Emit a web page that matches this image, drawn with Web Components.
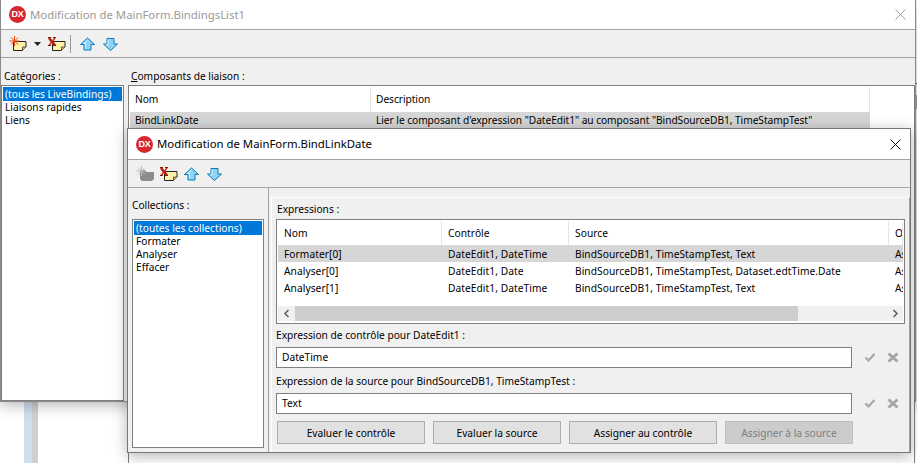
<!DOCTYPE html>
<html lang="fr"><head><meta charset="utf-8"><title>Modification</title>
<style>
html,body{margin:0;padding:0;height:100%;overflow:hidden;background:#fff}
body{font:10.2px/13px "Noto Sans","Liberation Sans",sans-serif;color:#000}
</style></head><body>
<x-desktop>
  <x-window slot="win" style="--l:0px;--t:-1px;--w:916px;--h:403px;--bd:#8b8b8b" caption="Modification de MainForm.BindingsList1" inactive>
    <x-toolbar slot="toolbar"><x-icon name="new"></x-icon><x-icon name="drop"></x-icon><x-icon name="del"></x-icon><x-icon name="sep"></x-icon><x-icon name="up"></x-icon><x-icon name="down"></x-icon></x-toolbar>
    <x-back-body>
      <x-list slot="cats" selected="0" items="(tous les LiveBindings)|Liaisons rapides|Liens"><u-label style="--pt:10px;--lh:17px;--pl:3px"><span>Caté<u>g</u>ories :</span></u-label></x-list>
      <x-pane slot="comps">
        <u-label style="--pt:10px;--lh:17px;--pl:3px"><span><u>C</u>omposants de liaison :</span></u-label>
        <x-grid style="--cols:241px 499px;--rw:740px;--gh:400px;--hh:25px;--cx:5px;letter-spacing:-.05px">
          <x-row head cells="Nom|Description"></x-row>
          <x-row sel cells="BindLinkDate|Lier le composant d'expression &quot;DateEdit1&quot; au composant &quot;BindSourceDB1, TimeStampTest&quot;"></x-row>
        </x-grid>
      </x-pane>
    </x-back-body>
  </x-window>

  <x-window slot="win" style="--l:127px;--t:128px;--w:784px;--h:325px;--bd:#777" caption="Modification de MainForm.BindLinkDate">
    <x-toolbar slot="toolbar"><x-icon name="newoff"></x-icon><x-icon name="del"></x-icon><x-icon name="up" style="margin-left:3px"></x-icon><x-icon name="down"></x-icon></x-toolbar>
    <x-front-body>
      <x-list slot="left" selected="0" items="(toutes les collections)|Formater|Analyser|Effacer"><u-label style="--lh:27px;--pl:0px"><span>Collections :</span></u-label></x-list>
      <x-expr-panel slot="right">
        <u-label style="--pt:2px;--lh:19px;--pl:1px"><span>Expressions :</span></u-label>
        <x-grid scroll style="--cols:164px 127px 320px 1fr;--gh:105px;--hh:24px;--mb:4px;--rt:1px;letter-spacing:.06px">
          <x-row head cells="Nom|Contrôle|Source|O"></x-row>
          <x-row sel cells="Formater[0]|DateEdit1, DateTime|BindSourceDB1, TimeStampTest, Text|As"></x-row>
          <x-row cells="Analyser[0]|DateEdit1, Date|BindSourceDB1, TimeStampTest, Dataset.edtTime.Date|As"></x-row>
          <x-row cells="Analyser[1]|DateEdit1, DateTime|BindSourceDB1, TimeStampTest, Text|As"></x-row>
        </x-grid>
        <x-expr label="Expression de contrôle pour DateEdit1 :" value="DateTime"></x-expr>
        <x-expr label="Expression de la source pour BindSourceDB1, TimeStampTest :" value="Text"></x-expr>
        <x-actions>
          <x-btn style="--bw:148px">Evaluer le contrôle</x-btn>
          <x-btn style="--bw:128px">Evaluer la source</x-btn>
          <x-btn style="--bw:148px">Assigner au contrôle</x-btn>
          <x-btn style="--bw:128px" disabled>Assigner à la source</x-btn>
        </x-actions>
      </x-expr-panel>
    </x-front-body>
  </x-window>
</x-desktop>

<script>
function el(name, css, html){
  customElements.define(name, class extends HTMLElement{
    connectedCallback(){
      if(this.shadowRoot) return;
      const r=this.attachShadow({mode:'open'});
      r.innerHTML='<style>'+css+'</style>'+(typeof html==='function'?html(this):html);
    }
  });
}
const esc=s=>s.replace(/&/g,'&amp;').replace(/</g,'&lt;').replace(/"/g,'&quot;');

el('x-desktop',`:host{display:block;position:relative;width:917px;height:463px;overflow:hidden;background:#fff}
 .bar{position:absolute;top:395px;bottom:0}
 .a{left:24px;width:8px;background:#cfdfee}.b{left:32px;width:6px;background:#d0d0d0}
 .c{left:356px;width:7px;background:#d0d0d0}
 .d{left:916px;top:83px;width:1px;height:1px;bottom:auto;background:#2a4a6a}
 .e{left:916px;top:95px;width:1px;height:14px;bottom:auto;background:#a0a0a0}`,
 `<div class="bar a"></div><div class="bar b"></div><div class="bar c"></div><div class="bar d"></div><div class="bar e"></div><slot name="win"></slot>`);

el('x-window',`:host{position:absolute;left:var(--l);top:var(--t);width:var(--w);height:var(--h);box-sizing:border-box;
   display:flex;flex-direction:column;background:#f0f0f0;border:1px solid var(--bd);box-shadow:0 3px 14px rgba(0,0,0,.3)}
 .t{flex:none;height:30px;background:#fff;border-bottom:1px solid #a3a3a3;display:flex;align-items:center;padding:0 0 0 8px;gap:5px;
   font:11.35px/16px "Noto Sans","Liberation Sans",sans-serif;color:#000}
 :host([inactive]) .t{color:#9a9a9a;height:29px}
 .dx{width:17px;height:17px;border-radius:50%;background:#d7272f;color:#fff;font:bold 9px/17px "Liberation Sans",sans-serif;text-align:center;letter-spacing:-.3px;flex:none}
 .c{flex:1;white-space:nowrap;margin-left:-1px}
 .x{flex:none;width:30px;display:flex;justify-content:center}
 svg{stroke:#111;fill:none;display:block}
 :host([inactive]) .x svg{stroke:#a0a0a0}
 .b{flex:1;min-height:0;display:flex;flex-direction:column}`,
 h=>`<div class="t"><span class="dx">DX</span><span class="c">${esc(h.getAttribute('caption'))}</span><span class="x"><svg width="11" height="11" viewBox="0 0 11 11"><path d="M.5.5l10 10M10.500.5l-10 10"/></svg></span></div><slot name="toolbar"></slot><div class="b"><slot></slot></div>`);

el('x-toolbar',`:host{flex:none;display:flex;align-items:flex-start;height:22px;padding:5px 0 0 7px;border-bottom:1px solid #a3a3a3;background:#f0f0f0;gap:3px}`,`<slot></slot>`);

const note=(x,y)=>`<path d="M${x+.5} ${y+.5}h12.500v5.500l-3.500 3.500h-9z" fill="#fff2a8" stroke="#222"/><path d="M${x+9.5} ${y+9.5}v-3.500h3.500" fill="#d9c97a" stroke="#555"/>`;
const star=c=>`<path d="M6.500 1v10M1.500 6h10M3 2.500l7 7M10 2.500l-7 7" stroke="${c}" stroke-width="1"/>`;
const ICONS={
 new:[20,`${note(5,6)}${star('#f04a10')}`],
 newoff:[20,`<path d="M5 7h14v7l-2 2H7l-2-2z" fill="#8c8c8c"/><path d="M5 5h6v2H5z" fill="#8c8c8c"/>${star('#bdbdbd')}`],
 del:[20,`${note(6,6)}<path d="M3 3l6 7.500" stroke="#b4210f" stroke-width="2.600"/><path d="M9 3 3 10.500" stroke="#c42a15" stroke-width="1.300"/><path d="M2 2.500h3M7 2.500h3M2 10.500h3M7 10.500h3" stroke="#8a1a0c"/>`],
 drop:[12,`<path d="M3 7h7l-3.500 4z" fill="#222"/>`],
 sep:[8,`<path d="M1.500 0v18" stroke="#9a9a9a"/>`],
 up:[18,`<path d="M7.500 3 14.500 9.500h-3.500v5.500h-7V9.500H.5z" fill="#8fd3f5" stroke="#0a78b8"/><path d="M7.500 5 3.500 8.500h2v5" stroke="#d8f2fc" fill="none"/>`],
 down:[18,`<path d="M9.500 15.500 16.500 9h-3.500V3.500h-7V9H2.500z" fill="#8fd3f5" stroke="#0a78b8"/><path d="M7 4.500V10H5" stroke="#d8f2fc" fill="none"/>`]
};
el('x-icon',`:host{display:block;flex:none}svg{display:block}`,h=>{
  const [w,b]=ICONS[h.getAttribute('name')];
  return `<svg width="${w}" height="18" viewBox="0 0 ${w} 18">${b}</svg>`;
});

el('u-label',`:host{display:block;flex:none;padding-top:var(--pt,0);height:var(--lh,27px);line-height:var(--lh,27px);padding-left:var(--pl,3px);white-space:nowrap}`,`<slot></slot>`);

el('x-back-body',`:host{flex:1;display:grid;grid-template-columns:123px 1fr;min-height:0}`,`<slot name="cats"></slot><slot name="comps"></slot>`);
el('x-pane',`:host{display:flex;flex-direction:column;padding-left:4px;min-height:0}`,`<slot></slot>`);

el('x-list',`:host{display:flex;flex-direction:column;min-height:0}
 .box{flex:1;min-height:0;background:#fff;border:1px solid #7f7f7f;padding:1px}
 .i{height:13px;line-height:13px;padding-left:2px;white-space:nowrap}
 .i.s{background:#0078d7;color:#fff;height:14px;line-height:14px}`,
 h=>{const s=+h.getAttribute('selected');return `<slot></slot><div class="box">`+h.getAttribute('items').split('|').map((t,i)=>`<div class="i${i===s?' s':''}">${esc(t)}</div>`).join('')+`</div>`;});

el('x-grid',`:host{display:flex;flex-direction:column;height:var(--gh);flex:none;box-sizing:border-box;background:#fff;border:1px solid #7f7f7f;padding:1px;margin-bottom:var(--mb,0);overflow:hidden}
 .rows{flex:1;min-height:0;overflow:hidden}
 .sb{flex:none;height:15px;display:grid;grid-template-columns:17px 503px 1fr 16px;background:#f0f0f0;align-items:center}
 .th{background:#cdcdcd;height:15px}
 .ar{display:flex;justify-content:center}
 svg{display:block}`,
 h=>`<div class="rows"><slot></slot></div>`+(h.hasAttribute('scroll')?`<div class="sb"><span class="ar"><svg width="7" height="9" viewBox="0 0 7 9"><path d="M5.500 1 2 4.500 5.500 8" fill="none" stroke="#606060" stroke-width="1.600"/></svg></span><span class="th"></span><span></span><span class="ar"><svg width="7" height="9" viewBox="0 0 7 9"><path d="M1.500 1 5 4.500 1.500 8" fill="none" stroke="#606060" stroke-width="1.600"/></svg></span></div><div style="height:1px"></div>`:''));

el('x-row',`:host{display:grid;grid-template-columns:var(--cols);width:var(--rw,auto);height:17px;line-height:17px;white-space:nowrap}
 :host([head]){height:var(--hh);line-height:var(--hh)}
 :host([sel]){background:#d6d6d6}
 span{padding-left:var(--cx,6px);padding-top:var(--rt,0);overflow:hidden;box-sizing:border-box;min-width:0;display:block}
 :host([head]) span{border-right:1px solid #e4e4e4;padding-top:0}`,
 h=>h.getAttribute('cells').split('|').map(c=>`<span>${esc(c)}</span>`).join(''));

el('x-front-body',`:host{flex:1;display:grid;grid-template-columns:141px 1fr;min-height:0}
 .left{display:flex;flex-direction:column;min-height:0;padding:4px 4px 4px 4px;border-right:1px solid #a3a3a3;box-sizing:border-box}
 .left ::slotted(*){flex:1}
 .right{display:flex;min-height:0;min-width:0;padding:9px 0 0 2px}
 .right ::slotted(*){flex:1;min-width:0}`,
 `<div class="left"><slot name="left"></slot></div><div class="right"><slot name="right"></slot></div>`);

el('x-expr-panel',`:host{display:flex;flex-direction:column;min-height:0;background:#f0f0f0;border-top:1px solid #fff;border-left:1px solid #fff;border-right:1px solid #a0a0a0;padding:0 4px}`,`<slot></slot>`);

el('x-expr',`:host{display:block;flex:none}
 .l{height:19px;line-height:15px;white-space:nowrap}
 .r{display:flex;align-items:center;height:21px;margin-bottom:6px}
 .in{width:576px;box-sizing:border-box;height:21px;background:#fff;border:1px solid #7f7f7f;padding-left:5px;line-height:19px;flex:none}
 svg{display:block;flex:none}`,
 h=>`<div class="l">${esc(h.getAttribute('label'))}</div><div class="r"><div class="in">${esc(h.getAttribute('value'))}</div>
 <svg style="margin-left:12px" width="12" height="11" viewBox="0 0 12 11"><path d="M1.500 5.500 4.500 8.500 10.500 2" fill="none" stroke="#a6a6a6" stroke-width="2.200"/></svg>
 <svg style="margin-left:11px" width="12" height="11" viewBox="0 0 12 11"><path d="M1.500 1.500 10.500 9.500M10.500 1.500 1.500 9.500" fill="none" stroke="#a6a6a6" stroke-width="3"/></svg></div>`);

el('x-actions',`:host{display:flex;gap:8px;padding:1px 0 0 1px;flex:none}`,`<slot></slot>`);
el('x-btn',`:host{display:block;box-sizing:border-box;width:var(--bw);height:23px;line-height:23px;text-align:center;background:#e1e1e1;border:1px solid #adadad;white-space:nowrap;flex:none}
 :host([disabled]){background:#ccc;border-color:#bfbfbf;color:#7e7e7e}`,`<slot></slot>`);
</script>
</body></html>
